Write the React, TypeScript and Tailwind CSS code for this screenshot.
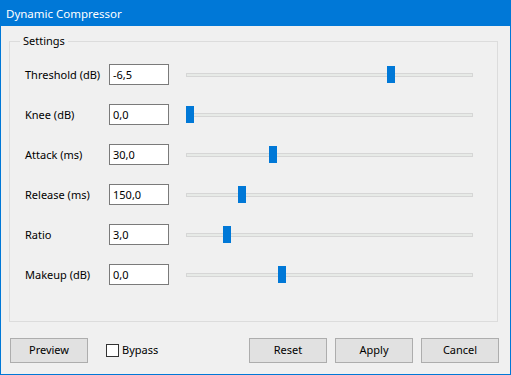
import React from 'react';

interface Param {
  label: string;
  value: string;
  pos: number; // thumb offset fraction along the track
}

const params: Param[] = [
  { label: 'Threshold (dB)', value: '-6,5', pos: 0.72 },
  { label: 'Knee (dB)', value: '0,0', pos: 0 },
  { label: 'Attack (ms)', value: '30,0', pos: 0.297 },
  { label: 'Release (ms)', value: '150,0', pos: 0.186 },
  { label: 'Ratio', value: '3,0', pos: 0.133 },
  { label: 'Makeup (dB)', value: '0,0', pos: 0.33 },
];

const TRACK_W = 287;
const THUMB_W = 8;

function Slider({ pos }: { pos: number }) {
  return (
    <div className="relative w-[287px] h-[21px] flex items-center">
      <div className="w-full h-[4px] border border-[#d6d6d6] bg-[#e7eae7]" />
      <div
        className="absolute top-[2px] w-[8px] h-[17px] bg-[#0078d7]"
        style={{ left: Math.round(pos * (TRACK_W - THUMB_W)) }}
      />
    </div>
  );
}

function Button({ children }: { children: React.ReactNode }) {
  return (
    <button className="w-[78px] h-[25px] border border-[#adadad] bg-[#e1e1e1] text-[11px] text-black flex items-center justify-center">
      {children}
    </button>
  );
}

export default function App() {
  return (
    <div
      className="w-[511px] h-[375px] border border-[#0078d7] bg-[#f0f0f0] flex flex-col text-black"
      style={{ fontFamily: '"Noto Sans", "Open Sans", sans-serif' }}
    >
      {/* Title bar */}
      <div className="h-[25px] bg-[#0078d7] text-white text-[11.5px] flex items-center pl-[5px] leading-none">
        Dynamic Compressor
      </div>

      {/* Settings group */}
      <div className="relative mt-[15px] ml-[8px] w-[489px] h-[281px] border border-[#dcdcdc]">
        <span className="absolute -top-[9px] left-[10px] px-[3px] bg-[#f0f0f0] text-[11px] leading-[16px]">
          Settings
        </span>
        <div className="pt-[22px] pl-[15px] flex flex-col gap-[19px]">
          {params.map((p) => (
            <div key={p.label} className="flex items-center h-[21px]">
              <div className="w-[84px] text-[11px] leading-none">{p.label}</div>
              <div className="w-[60px] h-[21px] border border-[#7a7a7a] bg-white text-[11px] flex items-center pl-[3px] leading-none">
                {p.value}
              </div>
              <div className="ml-[17px]">
                <Slider pos={p.pos} />
              </div>
            </div>
          ))}
        </div>
      </div>

      {/* Bottom buttons */}
      <div className="mt-[16px] flex items-center pl-[9px] pr-[11px]">
        <Button>Preview</Button>
        <label className="ml-[18px] flex items-center gap-[3px] text-[11px]">
          <span className="w-[13px] h-[13px] border border-[#333] bg-white" />
          Bypass
        </label>
        <div className="ml-auto flex gap-[8px]">
          <Button>Reset</Button>
          <Button>Apply</Button>
          <Button>Cancel</Button>
        </div>
      </div>
    </div>
  );
}
